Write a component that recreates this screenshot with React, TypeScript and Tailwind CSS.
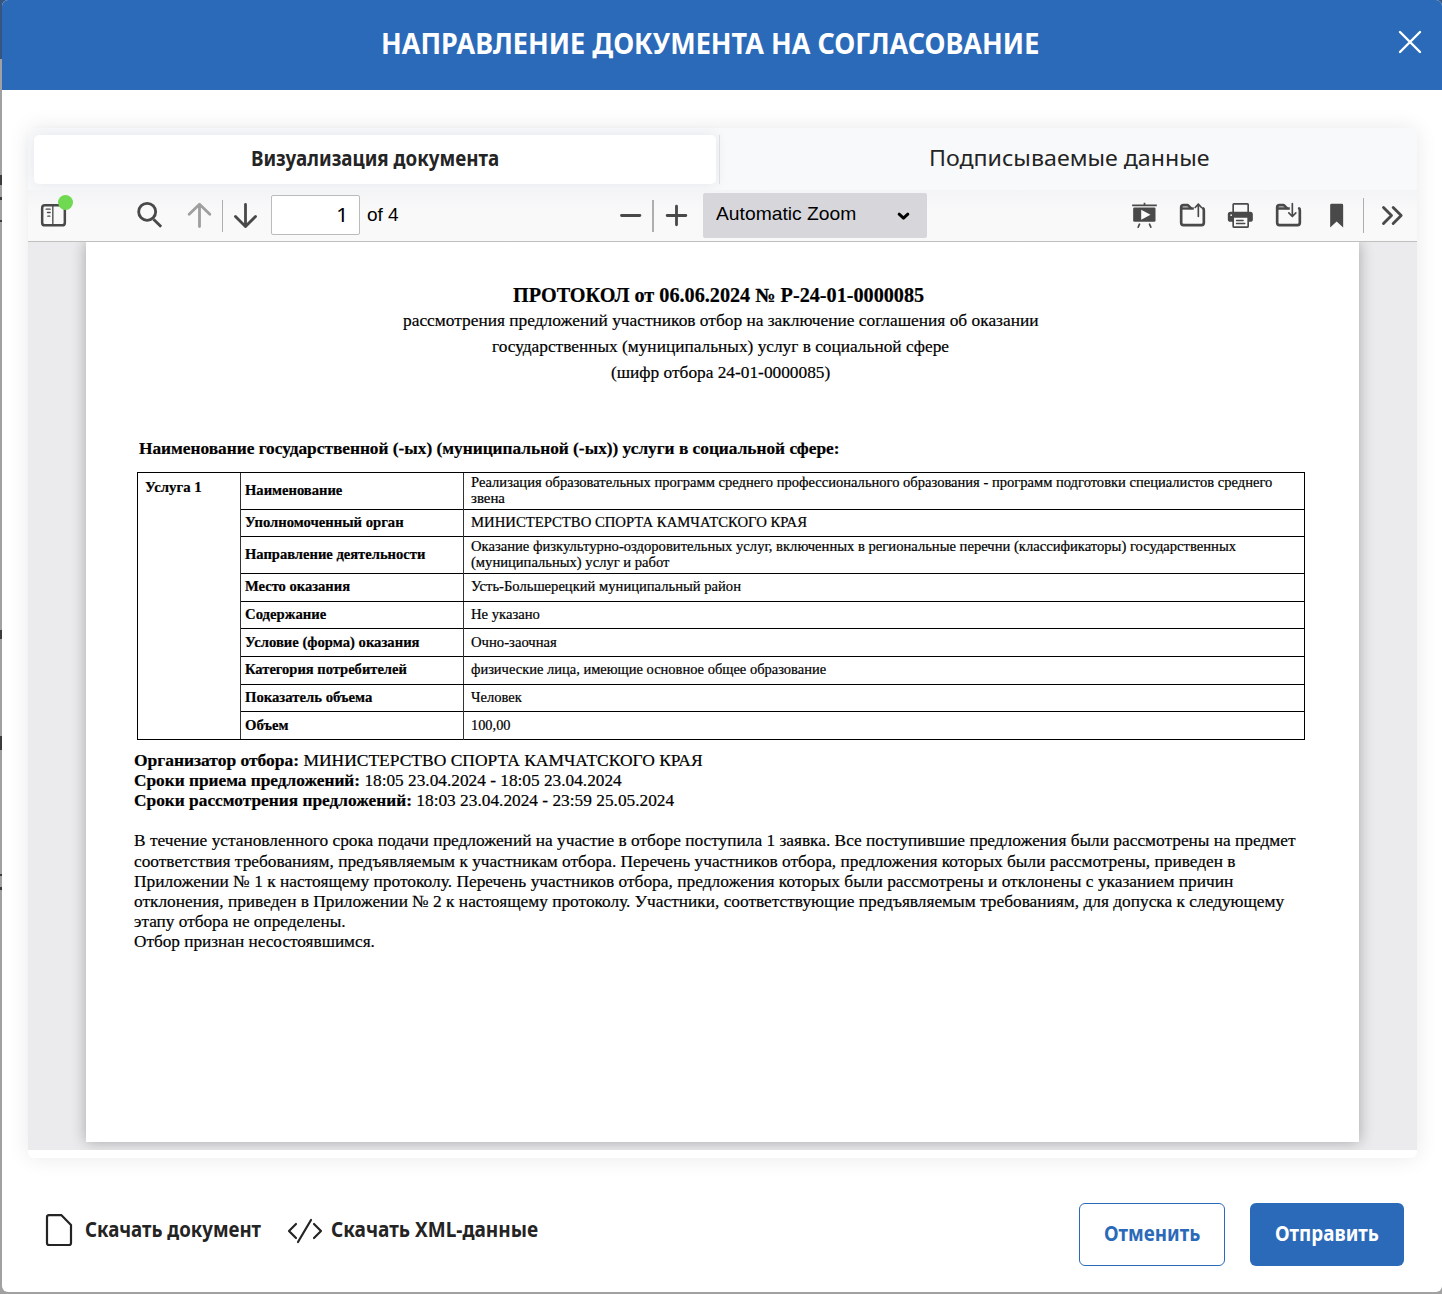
import { useLayoutEffect, useRef, type ReactNode } from 'react';

/** Single line of text stretched to the exact width of its box. */
function Fit({ className, children }: { className: string; children: ReactNode }) {
  const box = useRef<HTMLSpanElement>(null);
  const text = useRef<HTMLSpanElement>(null);
  useLayoutEffect(() => {
    if (!box.current || !text.current) return;
    const ratio = box.current.clientWidth / text.current.offsetWidth;
    text.current.style.transform = `scaleX(${ratio})`;
  }, []);
  return (
    <span ref={box} className={`block shrink-0 ${className}`}>
      <span ref={text} className="inline-block origin-left whitespace-nowrap align-top">
        {children}
      </span>
    </span>
  );
}

function Icon({ className, children }: { className: string; children: ReactNode }) {
  return (
    <svg
      viewBox="-1.5 -1.5 84 84"
      className={`size-7 shrink-0 ${className}`}
      fill="none"
      stroke="currentColor"
      strokeWidth={8.5}
      strokeLinecap="round"
      strokeLinejoin="round"
    >
      {children}
    </svg>
  );
}

const Folder = ({ children }: { children: ReactNode }) => (
  <>
    <path strokeWidth={8} d="M74 21q2 1 2 5v38q0 7-7 7H15q-7 0-7-7V18q0-7 7-7h13l9 9" />
    <path strokeWidth={7} strokeLinecap="butt" d="M8 21h38" />
    <g strokeWidth={5}>{children}</g>
  </>
);

const backdropMarks = [
  { id: 1, cls: 'mt-[116px] h-[10px]' },
  { id: 2, cls: 'mt-[12px] h-[3px]' },
  { id: 3, cls: 'mt-[20px] h-[2px]' },
  { id: 4, cls: 'mt-[408px] h-[9px]' },
  { id: 5, cls: 'mt-[97px] h-[14px]' },
  { id: 6, cls: 'mt-[124px] h-[2px]' },
  { id: 7, cls: 'mt-[11px] h-[3px]' },
];

const rows = [
  { label: 'Наименование', lw: 'w-[97px]', h: 'h-[37px]', lines: [{ t: 'Реализация образовательных программ среднего профессионального образования - программ подготовки специалистов среднего', w: 'w-[801px]' }, { t: 'звена', w: 'w-[34px]' }] },
  { label: 'Уполномоченный орган', lw: 'w-[159px]', h: 'h-[27px]', lines: [{ t: 'МИНИСТЕРСТВО СПОРТА КАМЧАТСКОГО КРАЯ', w: 'w-[336px]' }] },
  { label: 'Направление деятельности', lw: 'w-[180px]', h: 'h-[37px]', lines: [{ t: 'Оказание физкультурно-оздоровительных услуг, включенных в региональные перечни (классификаторы) государственных', w: 'w-[765px]' }, { t: '(муниципальных) услуг и работ', w: 'w-[198px]' }] },
  { label: 'Место оказания', lw: 'w-[105px]', h: 'h-[28px] pb-px', lines: [{ t: 'Усть-Большерецкий муниципальный район', w: 'w-[270px]' }] },
  { label: 'Содержание', lw: 'w-[81px]', h: 'h-[27px]', lines: [{ t: 'Не указано', w: 'w-[69px]' }] },
  { label: 'Условие (форма) оказания', lw: 'w-[175px]', h: 'h-[28px]', lines: [{ t: 'Очно-заочная', w: 'w-[86px]' }] },
  { label: 'Категория потребителей', lw: 'w-[162px]', h: 'h-[28px] pb-px', lines: [{ t: 'физические лица, имеющие основное общее образование', w: 'w-[355px]' }] },
  { label: 'Показатель объема', lw: 'w-[127px]', h: 'h-[27px]', lines: [{ t: 'Человек', w: 'w-[51px]' }] },
  { label: 'Объем', lw: 'w-[43px]', h: 'h-[27px]', lines: [{ t: '100,00', w: 'w-[40px]' }] },
];

const paragraph = [
  { t: 'В течение установленного срока подачи предложений на участие в отборе поступила 1 заявка. Все поступившие предложения были рассмотрены на предмет', w: 'w-[1161px] mb-px' },
  { t: 'соответствия требованиям, предъявляемым к участникам отбора. Перечень участников отбора, предложения которых были рассмотрены, приведен в', w: 'w-[1102px]' },
  { t: 'Приложении № 1 к настоящему протоколу. Перечень участников отбора, предложения которых были рассмотрены и отклонены с указанием причин', w: 'w-[1099px]' },
  { t: 'отклонения, приведен в Приложении № 2 к настоящему протоколу. Участники, соответствующие предъявляемым требованиям, для допуска к следующему', w: 'w-[1150px]' },
  { t: 'этапу отбора не определены.', w: 'w-[212px]' },
  { t: 'Отбор признан несостоявшимся.', w: 'w-[241px]' },
];

function Toolbar() {
  return (
    <div className="flex h-[52px] items-center border-b border-[#bfbfc0] bg-gradient-to-b from-[#f3f4f5] via-[#f9f9fa] via-40% to-[#f9f9fa] pb-px text-[#494949]">
      <div className="relative ml-[11px] h-7">
        <Icon className="">
          <rect x="8" y="11.5" width="68" height="60" rx="8" strokeWidth={7.5} />
          <path strokeWidth={4} d="M40 11v61" />
          <path strokeWidth={4} d="M20 23h12M24 33h8M25 44h6" />
        </Icon>
        <span className="absolute top-[-6.5px] left-[19px] size-[15px] rounded-full bg-[#6ed951]" />
      </div>
      <Icon className="ml-[68px]">
        <circle cx="35" cy="31" r="25.5" />
        <path d="M54 53l23 23" strokeLinecap="butt" />
      </Icon>
      <Icon className="ml-[22px] text-[#9f9f9f]">
        <path d="M42 75V9M11 38L42 8l31 30" />
      </Icon>
      <span className="mt-px ml-[9px] h-8 w-px bg-[#aeaeae]" />
      <Icon className="ml-[8px]">
        <path d="M42 9v66M12 45l30 30 30-30" />
      </Icon>
      <span className="ml-[12px] flex h-10 w-[89px] items-center justify-end rounded-[2px] border border-[#bbbbbc] bg-white pr-[11px] text-black">
        <Fit className="w-[12px] font-['Noto_Sans',sans-serif] text-[20px] leading-[26px]">1</Fit>
      </span>
      <span className="ml-[7px] text-black"><Fit className="-mt-px w-[32px] text-[19px] leading-[24px]">of 4</Fit></span>
      <Icon className="ml-[217px]">
        <path d="M15 42h55" />
      </Icon>
      <span className="mt-px ml-[8px] h-8 w-[2px] bg-[#aeaeae]" />
      <Icon className="ml-[8px]">
        <path d="M14 42h56M42 14v56" />
      </Icon>
      <div className="mt-px ml-[13px] flex h-[45px] w-[224px] items-center rounded-[2px] bg-[#d7d7db] pl-[13px] text-black">
        <Fit className="-mt-[3px] w-[139.5px] text-[19px] leading-[24px]">Automatic Zoom</Fit>
        <Icon className="-mt-px ml-[33.5px]">
          <path strokeWidth={9} d="M29 38l13 12 13-12" />
        </Icon>
      </div>
      <Icon className="ml-[202.5px]">
        <path strokeWidth={5} strokeLinecap="butt" d="M5 11.5h74M42 4v7" />
        <rect x="8" y="18" width="67" height="43" rx="4" fill="currentColor" stroke="none" />
        <path d="M32 25v30l28-15z" fill="#f9f9fa" stroke="none" />
        <path strokeWidth={5} d="M27 68l-4 9M57 68l4 9" />
      </Icon>
      <Icon className="ml-[20px]">
        <Folder><path d="M59.5 45V9M50 18l9.5-10 9.5 10" /></Folder>
      </Icon>
      <Icon className="ml-[20px]">
        <rect x="20" y="7" width="45" height="28" rx="2" strokeWidth={5} />
        <rect x="4" y="31" width="75" height="30" rx="8" fill="currentColor" stroke="none" />
        <rect x="20" y="46" width="45" height="31" rx="3" strokeWidth={5} fill="#f9f9fa" />
        <path strokeWidth={4} d="M30 57h20M30 66h25" />
        <circle cx="14" cy="41" r="2.5" fill="#f9f9fa" stroke="none" />
      </Icon>
      <Icon className="ml-[20px]">
        <Folder><path d="M53.5 6v38M43 34l10.5 11L64 34" /></Folder>
      </Icon>
      <Icon className="ml-[20px]">
        <path d="M27 7h31q4 0 4 4v67L42.5 60 23 78V11q0-4 4-4z" fill="currentColor" stroke="none" />
      </Icon>
      <span className="ml-[13.5px] h-[35px] w-px bg-[#aeaeae]" />
      <Icon className="ml-[14px]">
        <path d="M15 18l24 24-24 24M44 18l24 24-24 24" />
      </Icon>
    </div>
  );
}

function DocumentPage() {
  return (
    <article className="mx-auto flex h-[900px] w-[1273px] shrink-0 flex-col bg-white font-['Liberation_Serif','Times_New_Roman',serif] text-black shadow-[0_0_14px_rgba(0,0,0,0.3)] [-webkit-text-stroke:0.2px_black]">
      <header className="mt-[40px]">
        <Fit className="ml-[426.5px] w-[411px] text-[20px] leading-[26px] font-bold">ПРОТОКОЛ от 06.06.2024 № Р-24-01-0000085</Fit>
        <Fit className="ml-[317px] w-[636px] text-[17px] leading-[26px]">рассмотрения предложений участников отбор на заключение соглашения об оказании</Fit>
        <Fit className="ml-[406px] w-[457px] text-[17px] leading-[26px]">государственных (муниципальных) услуг в социальной сфере</Fit>
        <Fit className="ml-[525px] w-[219px] text-[17px] leading-[26px]">(шифр отбора 24-01-0000085)</Fit>
      </header>
      <Fit className="mt-[50px] ml-[53px] w-[701px] text-[17px] leading-[26px] font-bold">Наименование государственной (-ых) (муниципальной (-ых)) услуги в социальной сфере:</Fit>
      <section className="mt-[10px] ml-[51px] flex w-[1168px] border border-black text-[14px] leading-[16px]">
        <div className="w-[102px] pt-[7px] pl-[6.5px] font-bold"><Fit className="w-[57px]">Услуга 1</Fit></div>
        <div className="flex-1 border-l border-[#333]">
          {rows.map((row, i) => (
            <div key={row.label} className={`flex ${row.h} ${i < rows.length - 1 ? 'border-b border-black' : ''}`}>
              <div className="flex w-[222px] items-center pl-[4px] font-bold"><Fit className={row.lw}>{row.label}</Fit></div>
              <div className="-mb-px flex flex-1 flex-col justify-center border-l border-[#333] pb-px pl-[7px]">
                {row.lines.map((l) => <Fit key={l.t} className={l.w}>{l.t}</Fit>)}
              </div>
            </div>
          ))}
        </div>
      </section>
      <section className="mt-[11px] ml-[48px] text-[17px] leading-[20px]">
        <Fit className="w-[569px]"><b>Организатор отбора:</b> МИНИСТЕРСТВО СПОРТА КАМЧАТСКОГО КРАЯ</Fit>
        <Fit className="w-[488px]"><b>Сроки приема предложений:</b> 18:05 23.04.2024 - 18:05 23.04.2024</Fit>
        <Fit className="w-[540px]"><b>Сроки рассмотрения предложений:</b> 18:03 23.04.2024 - 23:59 25.05.2024</Fit>
      </section>
      <section className="mt-[20px] ml-[48.4px] text-[17px] leading-[20px]">
        {paragraph.map((l) => <Fit key={l.t} className={l.w}>{l.t}</Fit>)}
      </section>
    </article>
  );
}

export default function App() {
  return (
    <div className="relative h-[1294px] w-[1442px] overflow-hidden bg-[#a1a1a1] pl-[2px] font-['Liberation_Sans',Arial,sans-serif]">
      <div className="absolute top-0 left-0 h-[59px] w-full bg-[#36557f]" />
      <div className="absolute top-[59px] left-0 w-[2px]">
        {backdropMarks.map((m) => <div key={m.id} className={`bg-[#3c3c3c] ${m.cls}`} />)}
      </div>
      <div className="relative flex h-[1292px] flex-col overflow-hidden rounded-[6px] bg-white">
        <header className="flex h-[90px] shrink-0 items-center bg-[#2b6ab9] text-white">
          <Fit className="-mt-[4px] ml-[379px] w-[658px] font-['Noto_Sans',sans-serif] text-[28.5px] leading-[40px] font-bold">НАПРАВЛЕНИЕ ДОКУМЕНТА НА СОГЛАСОВАНИЕ</Fit>
          <svg viewBox="0 0 24 24" className="mt-[-6px] ml-[359px] size-6" stroke="currentColor" strokeWidth="2.4" strokeLinecap="round">
            <path d="M2 2l20 20M22 2L2 22" />
          </svg>
        </header>
        <main className="mt-[38px] ml-[26px] flex h-[1030px] w-[1389px] shrink-0 flex-col rounded-[6px] bg-white shadow-[0_0_22px_rgba(0,0,0,0.09)]">
          <nav className="flex h-[62px] items-start rounded-t-[6px] bg-[#f8f9fb] pt-[7px] pl-[6px] font-['Noto_Sans',sans-serif] text-[#242424]">
            <div className="flex h-[49px] w-[682px] justify-center rounded-[5px] bg-white pt-[8px] shadow-[0_0_14px_rgba(0,40,50,0.09)]">
              <Fit className="-ml-px w-[248px] text-[21.5px] leading-[30px] font-bold">Визуализация документа</Fit>
            </div>
            <div className="ml-[3px] flex h-[49px] flex-1 justify-center border-l border-[#dcdfe2] pt-[8px]">
              <Fit className="w-[280px] text-[21.5px] leading-[30px]">Подписываемые данные</Fit>
            </div>
          </nav>
          <Toolbar />
          <div className="flex h-[908px] items-start overflow-hidden bg-[#ebebed]">
            <DocumentPage />
          </div>
        </main>
        <footer className="flex flex-1 items-start font-['Noto_Sans',sans-serif] text-[21.5px] leading-[30px] font-bold text-[#242424]">
          <svg viewBox="0 0 28 34" className="mt-[55px] ml-[43px] h-[34px] w-[28px]" fill="none" stroke="currentColor" strokeWidth="2.2" strokeLinejoin="round">
            <path d="M4 2.2h12.5L26 12v18q0 2-2 2H4q-2 0-2-2V4.2q0-2 2-2z" />
          </svg>
          <Fit className="mt-[56px] ml-[12px] w-[176px]">Скачать документ</Fit>
          <svg viewBox="0 0 36 26" className="mt-[60px] ml-[26px] h-[26px] w-[36px]" fill="none" stroke="currentColor" strokeWidth="2.2" strokeLinecap="round" strokeLinejoin="round">
            <path d="M9 6L2 13l7 7M27 6l7 7-7 7M24 2L11 24" />
          </svg>
          <Fit className="mt-[56px] ml-[8px] w-[207px]">Скачать XML-данные</Fit>
          <button className="mt-[45px] ml-[541px] flex h-[63px] w-[146px] items-center justify-center rounded-[6px] border border-[#2b6ab9] pb-[3px] text-[#2b6ab9]">
            <Fit className="w-[96px]">Отменить</Fit>
          </button>
          <button className="mt-[45px] ml-[25px] flex h-[63px] w-[154px] items-center justify-center rounded-[6px] bg-[#2b6ab9] pb-[3px] text-white">
            <Fit className="w-[104px]">Отправить</Fit>
          </button>
        </footer>
      </div>
    </div>
  );
}
